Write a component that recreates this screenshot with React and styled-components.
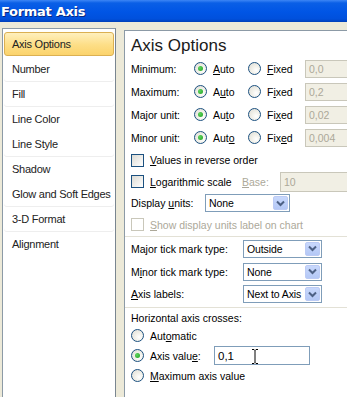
import React from "react";
import styled, { createGlobalStyle } from "styled-components";

const GlobalStyle = createGlobalStyle`
  html, body {
    margin: 0;
    padding: 0;
    background: #ece9d8;
    overflow: hidden;
  }
  body {
    font-family: "Liberation Sans", Arial, sans-serif;
    font-size: 10.5px;
    color: #000;
  }
`;

const Window = styled.div`
  width: 347px;
  height: 397px;
  display: flex;
  flex-direction: column;
  background: #ece9d8;
  overflow: hidden;
`;

const TitleBar = styled.div`
  height: 22px;
  flex: none;
  display: flex;
  align-items: center;
  padding-left: 1px;
  background: linear-gradient(
    #3d86f5 0,
    #0a5fe6 3px,
    #0055e5 12px,
    #0050dc 19px,
    #003fb8 22px
  );
  color: #fff;
  font-family: "DejaVu Sans", sans-serif;
  font-weight: bold;
  font-size: 13px;
  letter-spacing: -0.3px;
  text-shadow: 1px 1px 0 #0a2a80;
`;

const Body = styled.div`
  flex: 1;
  display: flex;
  align-items: flex-start;
  gap: 8px;
  padding: 6px 0 0 2px;
  min-height: 0;
`;

const Sidebar = styled.ul`
  list-style: none;
  margin: 0;
  width: 114px;
  height: 380px;
  padding: 3px 1px;
  box-sizing: border-box;
  flex: none;
  background: #fff;
  border: 1px solid #8c9aa6;
  border-right-color: #7a8690;
`;

const NavItem = styled.li`
  height: 24px;
  margin-bottom: 1px;
  display: flex;
  align-items: center;
  padding-left: 7px;
  box-sizing: border-box;
  white-space: nowrap;
  font-family: "Liberation Sans", Arial, sans-serif;
  font-size: 11px;
  letter-spacing: -0.25px;
  color: #222;
  border-radius: 3px;
  border: 1px solid ${p => (p.$active ? "#dbb052" : "transparent")};
  background: ${p =>
    p.$active ? "linear-gradient(#fff0bd, #fdde86 55%, #fbd36c)" : "transparent"};
  box-shadow: ${p => (p.$sep ? "0 1px 0 #eeeeee" : "none")};
`;

const Content = styled.div`
  flex: 1;
  margin-top: 2px;
  height: 380px;
  background: #fff;
  border: 1px solid #8c9aa6;
  border-right: none;
  padding-left: 6px;
  box-sizing: border-box;
  overflow: hidden;
`;

const Heading = styled.div`
  font-family: "Liberation Sans", Arial, sans-serif;
  font-size: 17px;
  color: #1a1a1a;
  height: 26px;
  padding-top: 6px;
  box-sizing: border-box;
  line-height: 18px;
`;

const Row = styled.div`
  height: ${p => p.$h || 23}px;
  display: flex;
  align-items: center;
  white-space: nowrap;
  color: ${p => (p.$disabled ? "#aca899" : "#000")};
`;

const Label = styled.span`
  width: ${p => p.$w}px;
  flex: none;
  color: ${p => (p.$disabled ? "#aca899" : "#000")};
`;

const Option = styled.label`
  display: flex;
  align-items: center;
  gap: 6px;
  width: ${p => (p.$w ? `${p.$w}px` : "auto")};
  flex: none;
`;

const RadioCircle = styled.span`
  width: 13px;
  height: 13px;
  box-sizing: border-box;
  border-radius: 50%;
  border: 1px solid #1c5180;
  background: radial-gradient(circle at 65% 65%, #ffffff 0, #f2f1ea 40%, #dcdbd4 100%);
  display: flex;
  align-items: center;
  justify-content: center;
  flex: none;
  &::after {
    content: "";
    width: 5px;
    height: 5px;
    border-radius: 50%;
    background: radial-gradient(circle at 35% 35%, #5ed45e, #21a121);
    display: ${p => (p.$checked ? "block" : "none")};
  }
`;

const CheckBox = styled.span`
  width: 13px;
  height: 13px;
  box-sizing: border-box;
  flex: none;
  border: 1px solid ${p => (p.$disabled ? "#c9c7ba" : "#1c5180")};
  background: ${p =>
    p.$disabled ? "#fff" : "linear-gradient(135deg, #dcdbd4, #fff)"};
`;

const Field = styled.div`
  height: ${p => p.$h || 18}px;
  width: ${p => p.$w}px;
  flex: none;
  box-sizing: border-box;
  display: flex;
  align-items: center;
  padding-left: 3px;
  position: relative;
  border: 1px solid ${p => (p.$disabled ? "#c9c7ba" : "#7f9db9")};
  background: ${p => (p.$disabled ? "#f1efe4" : "#fff")};
  color: ${p => (p.$disabled ? "#aca899" : "#000")};
  font-size: ${p => (p.$large ? "11.5px" : "inherit")};
`;

const Select = styled.div`
  height: 18px;
  width: ${p => p.$w}px;
  flex: none;
  box-sizing: border-box;
  border: 1px solid #7f9db9;
  background: #fff;
  display: flex;
  align-items: center;
  justify-content: space-between;
  padding: 1px 1px 1px 3px;
  letter-spacing: -0.1px;
`;

const DropButton = styled.span`
  width: 15px;
  height: 14px;
  box-sizing: border-box;
  border: 1px solid #bccbf5;
  border-radius: 2px;
  background: linear-gradient(#c8d8fc, #b4c8f6);
  display: flex;
  align-items: center;
  justify-content: center;
  flex: none;
`;

const Divider = styled.div`
  height: 1px;
  margin: ${p => p.$m || "0"};
  margin-left: -6px;
  background: #e3e1d6;
`;

const Cursor = styled.svg`
  position: absolute;
  left: 36px;
  top: 1px;
`;

const U = styled.u`
  text-decoration: underline;
`;

const Chevron = () => (
  <svg width="9" height="7" viewBox="0 0 9 7">
    <path d="M1 1.5 L4.5 5 L8 1.5" fill="none" stroke="#4d6185" strokeWidth="2" />
  </svg>
);

const Mn = ({ pre, k, post }) => (
  <span>
    {pre}
    <U>{k}</U>
    {post}
  </span>
);

const navItems = [
  { name: "Axis Options", active: true },
  { name: "Number", sep: true },
  { name: "Fill", sep: true },
  { name: "Line Color" },
  { name: "Line Style", sep: true },
  { name: "Shadow" },
  { name: "Glow and Soft Edges", sep: true },
  { name: "3-D Format", sep: true },
  { name: "Alignment" }
];

const unitRows = [
  { label: "Minimum:", auto: ["", "A", "uto"], fixed: ["", "F", "ixed"], value: "0,0" },
  { label: "Maximum:", auto: ["A", "u", "to"], fixed: ["F", "i", "xed"], value: "0,2" },
  { label: "Major unit:", auto: ["Au", "t", "o"], fixed: ["Fi", "x", "ed"], value: "0,02" },
  { label: "Minor unit:", auto: ["Aut", "o", ""], fixed: ["Fix", "e", "d"], value: "0,004" }
];

const UnitRow = ({ label, auto, fixed, value }) => (
  <Row>
    <Label $w={63}>{label}</Label>
    <Option $w={54}>
      <RadioCircle $checked />
      <Mn pre={auto[0]} k={auto[1]} post={auto[2]} />
    </Option>
    <Option $w={57}>
      <RadioCircle />
      <Mn pre={fixed[0]} k={fixed[1]} post={fixed[2]} />
    </Option>
    <Field $disabled $w={60}>
      {value}
    </Field>
  </Row>
);

const Dropdown = ({ w, value }) => (
  <Select $w={w}>
    <span>{value}</span>
    <DropButton>
      <Chevron />
    </DropButton>
  </Select>
);

const App = () => (
  <Window>
    <GlobalStyle />
    <TitleBar>Format Axis</TitleBar>
    <Body>
      <Sidebar>
        {navItems.map(item => (
          <NavItem key={item.name} $active={item.active} $sep={item.sep}>
            {item.name}
          </NavItem>
        ))}
      </Sidebar>
      <Content>
        <Heading>Axis Options</Heading>
        {unitRows.map(r => (
          <UnitRow key={r.label} {...r} />
        ))}
        <Row $h={22}>
          <Option>
            <CheckBox />
            <Mn pre="" k="V" post="alues in reverse order" />
          </Option>
        </Row>
        <Row $h={21}>
          <Option $w={111}>
            <CheckBox />
            <Mn pre="" k="L" post="ogarithmic scale" />
          </Option>
          <Label $w={38} $disabled>
            <Mn pre="" k="B" post="ase:" />
          </Label>
          <Field $disabled $w={80} $h={20}>
            10
          </Field>
        </Row>
        <Row $h={22}>
          <Label $w={74}>
            <Mn pre="Display " k="u" post="nits:" />
          </Label>
          <Dropdown w={85} value="None" />
        </Row>
        <Row $h={21} $disabled>
          <Option>
            <CheckBox $disabled />
            <Mn pre="" k="S" post="how display units label on chart" />
          </Option>
        </Row>
        <Divider $m="1px 0 0" />
        <Row $h={23}>
          <Label $w={112}>
            <Mn pre="Ma" k="j" post="or tick mark type:" />
          </Label>
          <Dropdown w={79} value="Outside" />
        </Row>
        <Row $h={23}>
          <Label $w={112}>
            <Mn pre="M" k="i" post="nor tick mark type:" />
          </Label>
          <Dropdown w={79} value="None" />
        </Row>
        <Row $h={22}>
          <Label $w={112}>
            <Mn pre="" k="A" post="xis labels:" />
          </Label>
          <Dropdown w={79} value="Next to Axis" />
        </Row>
        <Divider $m="2px 0 1px" />
        <Row $h={17}>Horizontal axis crosses:</Row>
        <Row $h={19}>
          <Option>
            <RadioCircle />
            <Mn pre="Aut" k="o" post="matic" />
          </Option>
        </Row>
        <Row $h={21}>
          <Option $w={83}>
            <RadioCircle $checked />
            <Mn pre="Axis valu" k="e" post=":" />
          </Option>
          <Field $w={96} $h={19} $large>
            0,1
            <Cursor width="8" height="17" viewBox="0 0 8 17">
              <path
                d="M1 1.5 H3 L4 2.5 L5 1.5 H7 M4 2.5 V14.5 M1 15.5 H3 L4 14.5 L5 15.5 H7"
                fill="none"
                stroke="#000"
                strokeWidth="1"
              />
            </Cursor>
          </Field>
        </Row>
        <Row $h={19}>
          <Option>
            <RadioCircle />
            <Mn pre="" k="M" post="aximum axis value" />
          </Option>
        </Row>
      </Content>
    </Body>
  </Window>
);

export default App;
